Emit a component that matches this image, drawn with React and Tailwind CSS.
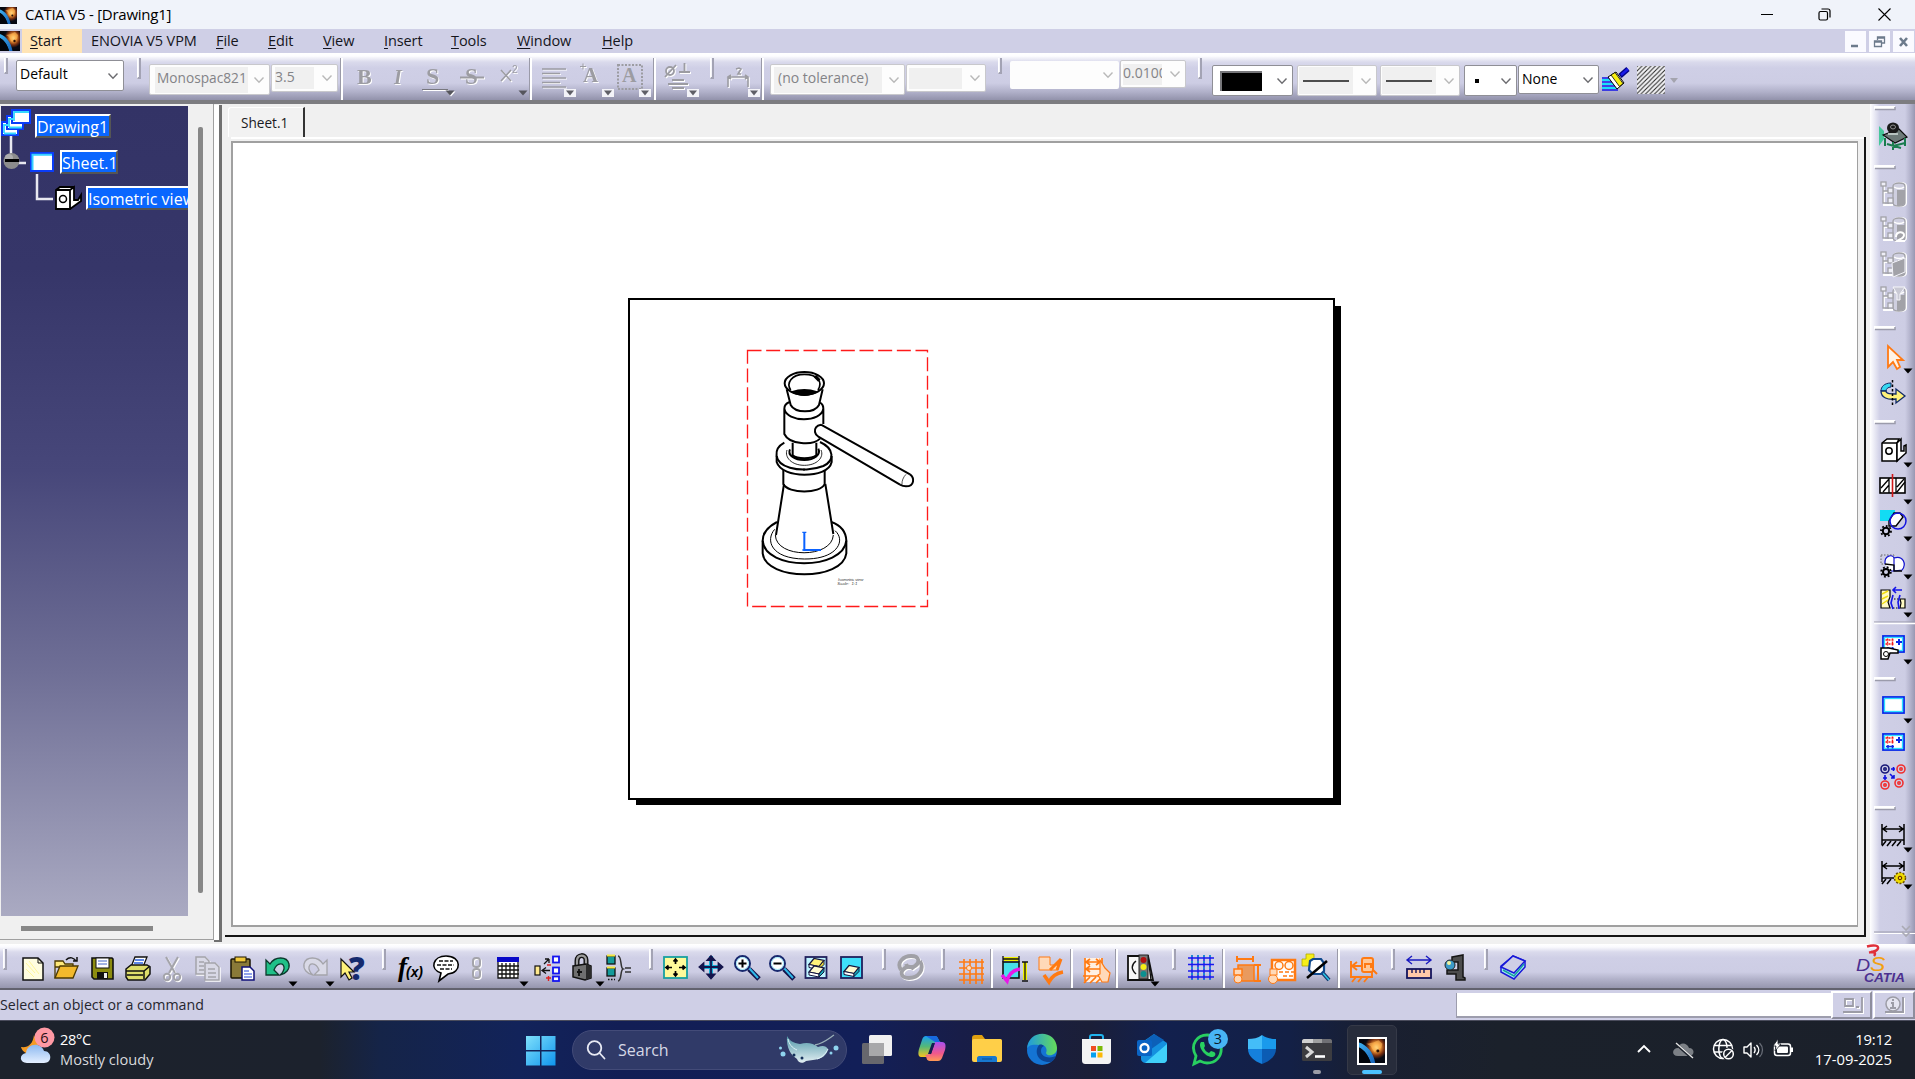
import React from "react";

/* ---------- shared pieces ---------- */

const UI = "font-['Open_Sans','Noto_Sans',sans-serif]";

function Draw({ w, h = 46, className = "", children }) {
  return (
    <svg width={w} height={h} viewBox={`0 0 ${w} ${h}`} className={`block shrink-0 overflow-visible ${className}`} fill="none">
      {children}
    </svg>
  );
}

function Grip({ cell, tall }) {
  return (
    <div className={`shrink-0 ${cell}`}>
      <div className={`mt-[5px] w-[4px] border-r-2 border-b-2 border-l border-r-[#a3a3b4] border-b-[#a3a3b4] border-l-white bg-[#f4f4fa] ${tall ? "h-[21px]" : "h-[16px]"}`} />
    </div>
  );
}

function Sep({ cell }) {
  return (
    <div className={`shrink-0 pt-[5px] ${cell}`}>
      <div className="h-full w-[3px] border-l border-[#9a9aa8] bg-white" />
    </div>
  );
}

function Combo({ cell, box, text, textBox = "", disabled, frame, children }) {
  return (
    <div className={`shrink-0 ${cell}`}>
      <div
        className={`relative flex items-center justify-between rounded-[2px] border ${
          disabled ? "border-[#c8c8cc] bg-[#fdfdfd] text-[#838387]" : "border-[#8f8f96] bg-white text-black"
        } ${frame || ""} ${box}`}
      >
        <div className={`overflow-hidden whitespace-nowrap ${textBox} ${disabled ? "bg-[#f0f0f0]" : ""}`}>{text}{children}</div>
        <svg width="12" height="8" viewBox="0 0 12 8" className="mr-[4px] shrink-0" fill="none">
          <path d="M1.5 1.5 6 6.3 10.500 1.500" stroke={disabled ? "#b9b9b9" : "#6c6c70"} strokeWidth="1.4" />
        </svg>
      </div>
    </div>
  );
}

const Galaxy = ({ className }) => (
  <svg viewBox="0 0 20 20" preserveAspectRatio="none" className={className}>
    <defs>
      <radialGradient id="glow" cx="0.58" cy="0.38" r="0.55">
        <stop offset="0" stopColor="#fff0a0" />
        <stop offset="0.35" stopColor="#f29a38" />
        <stop offset="0.7" stopColor="#7a3010" />
        <stop offset="1" stopColor="#070a14" />
      </radialGradient>
      <linearGradient id="planet" x1="0" y1="0" x2="1" y2="1">
        <stop offset="0" stopColor="#3fb0f0" />
        <stop offset="1" stopColor="#1561b8" />
      </linearGradient>
    </defs>
    <rect width="20" height="20" fill="#05070f" />
    <rect x="4" width="16" height="18" fill="url(#glow)" />
    <path d="M0 3C6 5 11 11 12.500 20H9C7.500 14 4 9 0 7Z" fill="url(#planet)" />
    <path d="M0 7C4 9 7.500 14 9 20H0Z" fill="#02050c" />
    <path d="M3 2l3 2 5-1 4-2 3 3-1 4-3-1-2 4-3-5z" fill="#ffb95a" opacity=".55" />
    <circle cx="14.500" cy="10" r="1.200" fill="#2a1208" />
  </svg>
);

const Tri = ({ x, y, c = "#000" }) => <path d={`M${x - 4.5} ${y - 2.5}h9l-4.500 5z`} fill={c} />;
const TriBox = ({ x, y }) => (
  <g>
    <rect x={x - 6} y={y - 4} width="12" height="8" fill="#f3f3f8" />
    <path d={`M${x - 4} ${y - 2.5}h8l-4 5z`} fill="#5f5f66" />
  </g>
);

/* ---------- title and menu ---------- */

function TitleBar() {
  return (
    <div className="flex h-[29px] items-center bg-[#f0f3fa]">
      <Galaxy className="mt-[1px] h-[17px] w-[17px]" />
      <div className="ml-[8px] text-[15px] leading-none tracking-[-0.25px]">CATIA V5 - [Drawing1]</div>
      <div className="flex-1" />
      <svg width="12" height="12" viewBox="0 0 12 12" className="mr-[45px]" stroke="#000" fill="none"><path d="M0 5.500h12" /></svg>
      <svg width="13" height="13" viewBox="0 0 13 13" className="mr-[47px]" stroke="#000" strokeWidth="1.200" fill="none">
        <rect x="1" y="3.500" width="8.500" height="8.500" rx="1.500" />
        <path d="M3.500 1h6.500a2 2 0 0 1 2 2v6.500" />
      </svg>
      <svg width="13" height="13" viewBox="0 0 13 13" className="mr-[24px]" stroke="#000" strokeWidth="1.100" fill="none"><path d="M.5.5l12 12M12.500.5l-12 12" /></svg>
    </div>
  );
}

function MenuItem({ cell, label, plain }) {
  return (
    <div className={`shrink-0 whitespace-nowrap ${cell}`}>
      {plain ? label : (<><span className="underline underline-offset-2">{label[0]}</span>{label.slice(1)}</>)}
    </div>
  );
}

function MenuBar() {
  return (
    <div className="flex h-[24px] items-center bg-[#cfcfe6] text-[14.5px] leading-[24px] tracking-[-0.1px] text-[#15151c]">
      <Galaxy className="h-[20px] w-[20px]" />
      <MenuItem cell="ml-[2px] w-[60px] bg-[#ffe4b5] pl-[8px]" label="Start" />
      <MenuItem cell="ml-[9px] w-[125px]" label="ENOVIA V5 VPM" plain />
      <MenuItem cell="w-[52px]" label="File" />
      <MenuItem cell="w-[55px]" label="Edit" />
      <MenuItem cell="w-[61px]" label="View" />
      <MenuItem cell="w-[67px]" label="Insert" />
      <MenuItem cell="w-[66px]" label="Tools" />
      <MenuItem cell="w-[85px]" label="Window" />
      <MenuItem cell="" label="Help" />
      <div className="flex-1" />
      <div className="flex gap-[3px] pr-[1px]">
        <div className="h-[21px] w-[21px] bg-[#fafaff]"><Draw w={21} h={21}><path d="M6 15h7" stroke="#6d7b8c" strokeWidth="2.500" /></Draw></div>
        <div className="h-[21px] w-[21px] bg-[#fafaff]"><Draw w={21} h={21}><path d="M8.500 9V6h7v6h-2.500M8.500 7h7M5.500 10h7v5.500h-7zM5.500 11h7" stroke="#6d7b8c" strokeWidth="1.300" /></Draw></div>
        <div className="h-[21px] w-[21px] bg-[#fafaff]"><Draw w={21} h={21}><path d="M7 7l7 8M14 7l-7 8" stroke="#6d7b8c" strokeWidth="2.600" /></Draw></div>
      </div>
    </div>
  );
}

/* ---------- top toolbar ---------- */

const GREY = "#9c9ca2";

function TopToolbar() {
  return (
    <div className="h-[51px] shrink-0 border-b-[4px] border-[#7c7c80] bg-[linear-gradient(180deg,#ffffff_0px,#fdfdff_3px,#dadaec_9px,#cfcfe6_15px,#cdcde4_30px,#b0b0c9_39px,#9292ab_47px)]">
      <div className="flex h-[47px] pl-[4px] text-[14px] leading-none">
        <Grip cell="w-[12px]" />
        <Combo cell="w-[121px] pt-[7px]" box="h-[31px] w-[108px] pl-[3px]" textBox="h-[22px] pt-[2px]" text="Default" />
        <Grip cell="w-[12px]" tall />
        <Combo cell="w-[122px] pt-[11px]" box="h-[31px] w-[121px] pl-[5px]" textBox="h-[26px] w-[93px] pt-[4px] pl-[2px] text-[13.7px]" text="Monospac821" disabled />
        <Combo cell="w-[69px] pt-[11px]" box="h-[28px] w-[67px] pl-[3px]" textBox="h-[22px] w-[39px] pt-[3px]" text="3.5" disabled />
        <Sep cell="w-[15px]" />
        <Draw w={35} className="drop-shadow-[1px_1px_0_#fff]"><text x="2" y="31" fontSize="22" fontWeight="700" fontFamily="Liberation Serif" fill={GREY}>B</text></Draw>
        <Draw w={30} className="drop-shadow-[1px_1px_0_#fff]"><text x="4" y="31" fontSize="20" fontWeight="700" fontStyle="italic" fontFamily="Liberation Serif" fill={GREY}>I</text></Draw>
        <Draw w={38} className="drop-shadow-[1px_1px_0_#fff]">
          <text x="6" y="31" fontSize="24" fontWeight="700" fontFamily="Liberation Serif" fill={GREY}>S</text>
          <path d="M2 36.500h26" stroke="#77777e" /><Tri x={30} y={40} c="#55555c" />
        </Draw>
        <Draw w={40} className="drop-shadow-[1px_1px_0_#fff]">
          <text x="7" y="31" fontSize="23" fontWeight="700" fontFamily="Liberation Serif" fill={GREY}>S</text>
          <path d="M2 24.500h24" stroke={GREY} strokeWidth="2" />
        </Draw>
        <Draw w={31}>
          <g className="drop-shadow-[1px_1px_0_#fff]"><path d="M3 17l10 11M13 17L3 28" stroke={GREY} strokeWidth="1.600" /><text x="14" y="20" fontSize="10" fontFamily="Liberation Sans" fill={GREY}>2</text></g>
          <Tri x={25} y={40} c="#55555c" />
        </Draw>
        <Sep cell="w-[12px]" />
        <Draw w={38}>
          <path d="M1 16h24M1 20.500h18M1 25h24M1 29.500h18M1 34h24" stroke="#fff" transform="translate(1 1)" />
          <path d="M1 16h24M1 20.500h18M1 25h24M1 29.500h18M1 34h24" stroke={GREY} strokeWidth="1.300" /><TriBox x={29} y={40} />
        </Draw>
        <Draw w={37}>
          <g className="drop-shadow-[1px_1px_0_#fff]"><path d="M1 13.500h6M4 10.500v6" stroke={GREY} /><text x="4" y="29" fontSize="21" fontFamily="Liberation Serif" fontWeight="700" fill={GREY}>A</text></g>
          <TriBox x={29} y={40} />
        </Draw>
        <Draw w={37}>
          <rect x="2" y="12" width="24" height="24" stroke={GREY} strokeWidth="2" strokeDasharray="2 1.500" /><text x="6" y="29" fontSize="20" fontFamily="Liberation Serif" fontWeight="700" fill={GREY}>A</text>
          <TriBox x={29} y={40} />
        </Draw>
        <Sep cell="w-[10px]" />
        <Draw w={47}>
          <g stroke={GREY} strokeWidth="1.800" className="drop-shadow-[1px_1px_0_#fff]"><circle cx="7" cy="18" r="4" /><path d="M2 24L13 12M16 19h11M21.500 10v9M9 27h12M5 31h20M9 35h12" /></g>
          <TriBox x={30} y={40} />
        </Draw>
        <Grip cell="w-[16px]" tall />
        <Draw w={35}>
          <g stroke={GREY} strokeWidth="1.600" className="drop-shadow-[1px_1px_0_#fff]"><path d="M2 34V24h20v10M5 22l-3 2 3 2M19 22l3 2-3 2M10 16l3-1 2 1-3 5h3" /></g>
          <TriBox x={28} y={40} />
        </Draw>
        <Sep cell="w-[9px]" />
        <Combo cell="w-[136px] pt-[11px]" box="h-[31px] w-[135px] pl-[3px]" textBox="h-[26px] w-[108px] pl-[4px] pt-[4px]" text="(no tolerance)" disabled />
        <Combo cell="w-[92px] pt-[11px]" box="h-[28px] w-[80px] pl-[2px]" textBox="h-[21px] w-[53px]" disabled />
        <Grip cell="w-[12px]" />
        <Combo cell="w-[110px] pt-[8px]" box="h-[28px] w-[109px]" frame="border-transparent" disabled />
        <Combo cell="w-[78px] pt-[7px]" box="h-[28px] w-[66px] pl-[2px]" textBox="h-[21px] w-[39px] pt-[2px]" text="0.0100" disabled />
        <Grip cell="w-[14px]" tall />
        <Combo cell="w-[85px] pt-[12px]" box="h-[31px] w-[81px] pl-[7px]"><div className="h-[20px] w-[42px] border-t-2 border-l-2 border-[#77777b] bg-black" /></Combo>
        <Combo cell="w-[83px] pt-[12px]" box="h-[31px] w-[80px] pl-[1px]" textBox="flex h-[27px] w-[54px] items-center justify-center" disabled><div className="h-[2px] w-[46px] bg-[#4d4d4d]" /></Combo>
        <Combo cell="w-[84px] pt-[12px]" box="h-[31px] w-[80px] pl-[1px]" textBox="flex h-[27px] w-[54px] items-center justify-center" disabled><div className="h-[2px] w-[46px] bg-[#4d4d4d]" /></Combo>
        <Combo cell="w-[54px] pt-[12px]" box="h-[31px] w-[53px] pl-[10px]"><div className="h-[4px] w-[4px] bg-black" /></Combo>
        <Combo cell="w-[83px] pt-[12px]" box="h-[29px] w-[81px] pl-[3px]" textBox="h-[20px] pt-[2px]" text="None" />
        <Draw w={36}>
          <path d="M1 25h16M1 29h16M1 33h16M1 37h16" stroke="#1414e8" strokeWidth="1.600" /><path d="M1 27h14M1 31h14M1 35h16" stroke="#18e0f8" strokeWidth="2" />
          <path d="M7 24l8-5 8 11-7 6z" fill="#fff" stroke="#000" /><path d="M10 22l4-2.500 8 11-3.500 3z" fill="#f8ee10" stroke="#000" strokeWidth=".8" />
          <path d="M19 23l8-7" stroke="#000084" strokeWidth="5" /><path d="M20 22l7-6" stroke="#1a1ae8" strokeWidth="2.500" />
        </Draw>
        <Draw w={33}>
          <defs><pattern id="hatch" width="4.500" height="4.500" patternUnits="userSpaceOnUse"><path d="M-1 5.500L5.500-1M-1 1L1-1M3.500 5.500L5.500 3.500" stroke="#222" strokeWidth="1" /></pattern></defs>
          <rect x="0" y="13" width="28" height="28" fill="#f3f3f6" /><rect x="0" y="13" width="28" height="28" fill="url(#hatch)" />
        </Draw>
        <Draw w={10}><path d="M0 25h8l-4 5z" fill="#a4a4ae" /></Draw>
      </div>
    </div>
  );
}

/* ---------- specification tree ---------- */

function TreeLabel({ className = "", children }) {
  return (
    <div className={`h-[24px] shrink-0 border-t-2 border-l-2 border-r-2 border-b-2 border-t-white border-l-white border-r-[#555] border-b-[#555] bg-[#0a66ff] text-[16px] leading-[23px] whitespace-nowrap text-white ${className}`}>
      {children}
    </div>
  );
}

function Tree() {
  return (
    <div className="flex h-[836px] w-[214px] shrink-0 flex-col border-r border-b border-[#a0a0a0] bg-[#f0f0f0]">
      <div className="flex h-[814px] pt-[2px] pl-[1px]">
        <div className="relative h-[810px] w-[187px] overflow-hidden bg-[linear-gradient(180deg,#333366_0%,#363669_20%,#47477a_45%,#6f6f96_70%,#aaaac2_100%)]">
          <Draw w={90} h={110} className="absolute top-0 left-0">
            <path d="M10 28v23M17 57h8M36 68v25h16" stroke="#e8e8f0" strokeWidth="2.500" />
            <g strokeWidth="2" stroke="#0a3cf8"><rect x="1" y="16" width="16" height="13" fill="#fff" /><rect x="6" y="10" width="16" height="13" fill="#fff" /><rect x="11" y="4" width="18" height="13" fill="#fff" /></g>
            <path d="M13 15V6h15M8 21v-8h4M3 27v-8h4M3 27.500h12M8 21.500h13" stroke="#35d8ff" strokeWidth="1.800" />
            <circle cx="10.500" cy="55" r="8" fill="#8c8c8c" /><circle cx="8" cy="52" r="4" fill="#aeaeae" /><path d="M4 54.500h14" stroke="#000" strokeWidth="3" />
            <rect x="30" y="47" width="22" height="18" fill="#fff" stroke="#0a3cf8" strokeWidth="2" /><path d="M31.500 64V48.800h19.500" stroke="#35d0ff" strokeWidth="2" />
            <path d="M55 84l4-3h13v18l-3 4H55z" fill="#fff" stroke="#000" strokeWidth="1.800" /><path d="M69 103V84H55M69 84l4-3v13h4l3-5v6l-11 8" fill="#fff" stroke="#000" strokeWidth="1.800" /><circle cx="62" cy="93" r="3.500" stroke="#000" strokeWidth="1.500" />
          </Draw>
          <div className="flex flex-col pt-[8px]">
            <TreeLabel className="ml-[34px] w-[76px]">Drawing1</TreeLabel>
            <TreeLabel className="mt-[12px] ml-[59px] w-[58px]">Sheet.1</TreeLabel>
            <TreeLabel className="mt-[12px] ml-[85px] w-[120px]">Isometric view</TreeLabel>
          </div>
        </div>
        <div className="mt-[21px] ml-[10px] h-[766px] w-[5px] rounded-[2px] bg-[#878787]" />
      </div>
      <div className="mt-[8px] ml-[21px] h-[5px] w-[132px] bg-[#878787]" />
    </div>
  );
}

/* ---------- drawing canvas ---------- */

function ScrewJack() {
  return (
    <svg viewBox="0 0 600 840" width="200" height="280" className="absolute top-[197px] left-[507px]" fill="none" stroke="#000" strokeWidth="6">
      <rect x="22.500" y="31.500" width="540" height="768" stroke="#ff1a1a" strokeWidth="4" strokeDasharray="42 14" />
      <ellipse cx="193" cy="130" rx="59" ry="34" />
      <path d="M152 150C138 128 155 103 193 103S250 125 234 150" strokeWidth="5" />
      <path d="M225 108l13 14" strokeWidth="10" />
      <path d="M158 156c20-8 50-8 70 0-20 12-50 12-70 0z" fill="#000" />
      <path d="M140 148l12 47C158 206 172 214 195 214s36-8 42-19l11-47" />
      <path d="M149 186C138 190 133 198 133 206C140 248 244 248 250 206C250 198 248 192 240 188M133 206v76C148 314 218 318 240 296M250 206v46" />
      <path d="M243 254c-14 2-20 12-18 22s6 12 10 14M243 254L510 403M235 290L480 434" />
      <path d="M510 403c14 10 14 36-12 36-8 0-13-2-18-5" />
      <path d="M498 403c-8 8-13 20-12 30" strokeWidth="2" />
      <path d="M158 308v38c14 12 56 12 71 0v-38" />
      <path d="M150 328c-8 16 12 32 43 32s50-16 42-34" strokeWidth="6" />
      <path d="M141 330c-8 22 14 46 52 46s60-24 50-46" strokeWidth="2.500" />
      <path d="M133 308C100 326 98 368 150 383C180 392 220 390 250 378C284 362 284 326 240 306" />
      <path d="M110 348v18C118 392 156 404 193 404s76-10 82-38v-18" />
      <path d="M130 390v42C144 462 242 462 254 432v-42" />
      <path d="M132 432L108 585M256 432L280 582" />
      <path d="M111 546C84 560 68 578 68 602C74 692 310 692 319 602C318 576 302 556 274 546" />
      <path d="M68 602v38C78 724 308 724 319 640v-38" />
      <path d="M104 568C76 600 92 656 193 657S318 600 285 572" strokeWidth="3" />
      <path d="M106 585C108 656 276 656 280 585" strokeWidth="3" />
      <path d="M192 385v8" strokeWidth="3" />
      <path d="M193 577v53h50" stroke="#0a62ff" strokeWidth="6" />
      <path d="M187 577h12M187 630h10" stroke="#0a62ff" strokeWidth="4" />
      <g fill="#444" stroke="none" fontFamily="Liberation Sans" fontStyle="italic" fontSize="13">
        <text x="294" y="724" textLength="76">Isometric view</text>
        <text x="292" y="736" textLength="60" xmlSpace="preserve">Scale:  1:1</text>
      </g>
    </svg>
  );
}

function DrawingWindow() {
  return (
    <div className="flex h-[840px] flex-1 bg-[#f0f0f0]">
      <div className="mt-[1px] mr-[3px] h-[837px] w-[8px] border-r-[3px] border-b-[2px] border-[#707070] bg-white" />
      <div className="flex h-[833px] w-[1641px] flex-col pl-[3px]">
        <div className="mt-[3px] flex h-[30px] shrink-0">
          <div className="h-[30px] w-[77px] rounded-tl-[3px] border-t border-r-[2px] border-l border-t-white border-r-[#333] border-l-white bg-[#f2f2f2] pt-[8px] pl-[12px] text-[13.6px] leading-none text-[#1a1a22]">Sheet.1</div>
        </div>
        <div className="-ml-[3px] h-[800px] border-r-2 border-b-2 border-[#151515] pl-[6px]">
          <div className="h-[2px] bg-white" />
          <div className="relative mt-[2px] h-[786px] w-[1627px] overflow-hidden border-t-2 border-r border-b-2 border-l-2 border-[#a0a0a0] bg-white">
            <div className="absolute top-[163px] left-[403px] h-[499px] w-[705px] bg-black" />
            <div className="absolute top-[155px] left-[395px] h-[502px] w-[707px] border-2 border-black bg-white" />
            <ScrewJack />
          </div>
        </div>
      </div>
    </div>
  );
}

/* ---------- right toolbar ---------- */

const HG = ({ at }) => (
  <g transform={`translate(4 ${at})`}><rect width="21" height="3" fill="#fff" /><path d="M1 3.500h20V1" stroke="#9b9bab" strokeWidth="1.500" /></g>
);

function DbIcon({ at, kind }) {
  return (
    <g transform={`translate(10 ${at})`}>
      <path d="M14 5c0-4 12-4 12 0v17c0 4-12 4-12 0z" stroke="#fff" strokeWidth="2" />
      <path d="M13 5c0-4 12-4 12 0v17c0 4-12 4-12 0z" fill="#cfcfe0" stroke="#a2a2a8" strokeWidth="1.300" />
      <path d="M17 9h8v13c0 2-4 3-8 3z" fill="#a2a2a8" />
      <path d="M14 6c3 2 8 2 10 0" stroke="#fff" strokeWidth="1.500" />
      <g transform="translate(1 1)" stroke="#fff" strokeWidth="1.800"><path d="M3 2v21h9M3 10h5" /></g>
      <g fill="#eeeef6" stroke="#a2a2a8" strokeWidth="1.300"><path d="M3 4v18h6M3 10h5" fill="none" /><rect x="1" y="1" width="5" height="4" /><rect x="8" y="7" width="5" height="5" /><rect x="8" y="17" width="5" height="5" /></g>
      {kind === 1 && <path d="M16 21c0-6 8-6 8-2s-5 4-7 6h8" stroke="#fff" strokeWidth="2" />}
      {kind === 2 && <path d="M12 12l13-5v14l-12 5z" fill="#a2a2a8" stroke="#f4f4fa" />}
      {kind === 3 && <path d="M13 1h12l-5 7v6h-3V8z" fill="#c9c9d4" stroke="#f6f6fa" />}
    </g>
  );
}

const MiniSheet = ({ at }) => (
  <g transform={`translate(12 ${at})`}>
    <rect x="1" y="1" width="21" height="16" fill="#fff" stroke="#0628e8" strokeWidth="1.800" /><rect x="2.500" y="2.500" width="18" height="13" stroke="#2be0ff" strokeWidth="1.300" />
  </g>
);
const MiniViews = () => (
  <g>
    <path d="M3.500 5h9M3.500 9h9M5.500 3.500v7M10.500 3.500v7" stroke="#f01818" strokeWidth="1.400" strokeDasharray="2 1" /><path d="M14 7h6M17 4v6" stroke="#0a28e8" strokeWidth="2" />
    <path d="M4 13.500h8M6 12v3.500M10.500 12v3.500" stroke="#0a28e8" strokeWidth="1.600" />
  </g>
);

function RightToolbar() {
  return (
    <div className="h-[843px] w-[45px] shrink-0 bg-[linear-gradient(90deg,#ffffff_0px,#ececf6_4px,#cfcfe6_10px,#cdcde4_35px,#b4b4cd_40px,#9898b2_45px)]">
      <Draw w={45} h={840}>
        <HG at={2} />
        <g transform="translate(9 17)">
          <path d="M0 5l5 5v8l-5 7z" fill="#45c79a" /><path d="M4 14l16-6 8 8-12 6z" fill="#6d7a78" stroke="#0b0b0b" strokeWidth="1.200" /><path d="M6 17v8M14 21v8M26 17v8M14 25l12-3M8 23l14 4" stroke="#1a7d4f" strokeWidth="2" />
          <ellipse cx="14" cy="7" rx="6" ry="5.500" fill="#1a1a1a" /><ellipse cx="14" cy="6" rx="2.500" ry="2" stroke="#8f8f8f" /><path d="M9 13h10" stroke="#b8c4c0" strokeWidth="2" />
        </g>
        <HG at={61} />
        <DbIcon at={77} /><DbIcon at={112} kind={1} /><DbIcon at={147} kind={2} /><DbIcon at={182} kind={3} />
        <path d="M18 242v21l5-5 4 7 3-2-3-7h6z" fill="#fff3e6" stroke="#ff7a14" strokeWidth="1.800" /><Tri x={38} y={267} />
        <HG at={222} />
        <g transform="translate(10 276)">
          <path d="M11 3C4 3 1 7 1 11h5c0-2 2-4 5-4z" fill="#35d8f0" stroke="#102a66" /><path d="M1 11c0 7 7 9 15 8v4l9-7-9-7v5c-5 0-10 0-10-3z" fill="#fff27a" stroke="#102a66" strokeWidth="1.300" /><path d="M12.500 0v26" stroke="#000" strokeWidth="1.500" strokeDasharray="2.500 2" />
        </g>
        <HG at={316} />
        <g transform="translate(11 333)" stroke="#000" strokeWidth="1.500"><path d="M1 6l5-4h12l-2 4v18H1z" fill="#fff" /><path d="M16 6l4-4v12h3v-5l2-1v8l-9 8z" fill="#fff" /><path d="M1 6h15" /><circle cx="8" cy="14" r="3.200" /></g>
        <Tri x={38} y={361} />
        <g transform="translate(10 370)"><rect x="0" y="4" width="25" height="15" fill="#fff" stroke="#000" strokeWidth="1.600" /><path d="M9 4v15M16 4v15M1 14l8-9M3 18l6-7M17 13l7-8M17 18l8-10" stroke="#000" strokeWidth="1.300" /><path d="M12.500 0v23" stroke="#d01818" strokeWidth="1.600" /></g>
        <Tri x={38} y={398} />
        <g transform="translate(10 405)"><rect x="0" y="1" width="15" height="11" fill="#12dcf4" /><path d="M9 12l5-8h6l3 4-7 9h-7z" fill="#fff" stroke="#000" strokeWidth="1.400" /><circle cx="18" cy="12" r="8" stroke="#1414e0" strokeWidth="1.500" /><circle cx="6" cy="22" r="3.200" stroke="#000" strokeWidth="2" /><circle cx="6" cy="22" r="5" stroke="#000" strokeWidth="1.800" strokeDasharray="1.800 2" /></g>
        <Tri x={38} y={435} />
        <g transform="translate(10 448)"><path d="M1 3h13v9H1z" stroke="#666" strokeDasharray="1.500 1.500" /><path d="M5 12C4 3 13 2 14 6v13h-3M14 6c9-3 13 6 8 12l-8 1" fill="#fff" stroke="#1414d0" strokeWidth="1.200" /><path d="M5 12l9 1v6h8" stroke="#000" strokeWidth="1.300" /><circle cx="6" cy="20" r="3" stroke="#000" strokeWidth="2" /><circle cx="6" cy="20" r="4.800" stroke="#000" strokeWidth="1.800" strokeDasharray="1.800 2" /></g>
        <Tri x={38} y={473} />
        <g transform="translate(10 482)"><path d="M1 4h9v7l-2 5 2 6H1z" fill="#fffbc4" stroke="#000" strokeWidth="1.200" /><path d="M20 13h5v9h-5l1-5z" fill="#fffbc4" stroke="#000" strokeWidth="1.200" /><path d="M2 8l6-3M2 13l6-3M2 18l6-4" stroke="#f0dc10" strokeWidth="1.500" /><path d="M14 13h5M13 22h5" stroke="#000" strokeDasharray="1.500 1.500" /><path d="M13 9l-2 8 2 6M20 9l-2 7 1 7M13 4h9M16 1l-3 3 3 3" stroke="#1414e8" strokeWidth="1.600" /></g>
        <Tri x={38} y={511} />
        <path d="M4 518h41" stroke="#9b9bab" /><path d="M4 519.500h41" stroke="#fff" strokeWidth="1.500" />
        <MiniSheet at={531} /><g transform="translate(12 531)"><MiniViews /></g>
        <path d="M11 544h8l9 2v3h-8l-2 6h-7z" fill="#fff" stroke="#000" strokeWidth="1.500" /><circle cx="16" cy="550" r="2.500" stroke="#000" /><Tri x={38} y={558} />
        <HG at={573} />
        <MiniSheet at={592} /><Tri x={38} y={617} />
        <MiniSheet at={629} /><g transform="translate(12 629)"><MiniViews /></g>
        <g strokeWidth="1.600"><g stroke="#181878"><circle cx="15" cy="665" r="4" /><circle cx="15" cy="665" r="1.200" /></g><g stroke="#f03030"><circle cx="31" cy="665" r="4" /><circle cx="31" cy="665" r="1.200" /><circle cx="29" cy="679" r="4" /><circle cx="29" cy="679" r="1.200" /><circle cx="15" cy="681" r="4" /><circle cx="15" cy="681" r="1.200" /></g><path d="M21 665h4M23.500 663v4M15 671v5M13 674h4M20 670l4 4M24 671v3h-3" stroke="#1010e0" /></g>
        <HG at={702} />
        <g stroke="#000" strokeWidth="1.500"><path d="M12 720v21M34 720v21M13 725h20M17 722l-4 3 4 3M29 722l4 3-4 3M12 736h22" /><path d="M12 742l4-5M17 742l4-5M22 742l4-5M27 742l4-5" /></g><Tri x={38} y={746} />
        <g stroke="#000" strokeWidth="1.500"><path d="M12 757v21M34 757v10M13 762h20M17 759l-4 3 4 3M29 759l4 3-4 3M12 774h12" /><path d="M12 780l4-5M17 780l4-5" /></g>
        <circle cx="30" cy="774" r="5.500" fill="#f0dc00" stroke="#6b5200" strokeWidth="1.500" strokeDasharray="2 1.500" /><circle cx="30" cy="774" r="1.800" stroke="#5a1800" /><Tri x={38} y={783} />
        <path d="M4 828h41" stroke="#9b9bab" /><path d="M4 829.500h41" stroke="#fff" />
        <path d="M32 822l4 4 4-4M32 828l4 4 4-4" stroke="#aaaab4" strokeWidth="1.600" />
      </Draw>
    </div>
  );
}

/* ---------- bottom toolbar ---------- */

const O = "#ff7a12";

const Cube = ({ y, pale }) => (
  <g transform={`translate(5 ${y})`}><path d="M1 7l5-6 10 2-5 6z" fill={pale ? "#fff27a" : "#fffbd0"} stroke="#14143c" strokeWidth="1.200" /><path d="M1 7l10 2v3L1 10z" fill="#fff" stroke="#14143c" /><path d="M11 9l5-6v4l-5 5z" fill={pale ? "#e8d83c" : "#18a8b8"} stroke="#14143c" /></g>
);

function BottomToolbar() {
  return (
    <div className="flex h-[46px] shrink-0 border-b-2 border-[#62626e] bg-[linear-gradient(180deg,#ffffff_0px,#fafafe_3px,#dadaec_8px,#cfcfe6_14px,#cdcde4_28px,#b2b2ca_35px,#9696ae_44px)] pl-[3px]">
      <Grip cell="w-[19px]" tall />
      <Draw w={32}><path d="M1 14h15l5 5v17H1z" fill="#fffde0" stroke="#111" strokeWidth="1.500" /><path d="M16 14v5h5" stroke="#111" /><path d="M4 19l9 10M7 17l10 13M4 25l8 8" stroke="#fff69a" /></Draw>
      <Draw w={37}><path d="M1 17h8l2 3h8v3H1zM1 17v17" fill="#ffe97a" stroke="#4d3a00" strokeWidth="1.300" /><path d="M1 34l5-12h18l-5 12z" fill="#f2b92c" stroke="#4d3a00" strokeWidth="1.300" /><path d="M12 16c4-4 8-2 10 1M23 13v4h-4" stroke="#111" strokeWidth="1.500" /></Draw>
      <Draw w={34}><path d="M1 14h20l1 1v20H3l-2-2z" fill="#8c8c10" stroke="#111" strokeWidth="1.600" /><rect x="5" y="14" width="13" height="10" fill="#fff" stroke="#111" /><path d="M7 17h9M7 20h9" stroke="#4466c8" /><rect x="6" y="28" width="11" height="7" fill="#111" /><rect x="13" y="29" width="3" height="5" fill="#eee" /></Draw>
      <Draw w={38}><path d="M6 23l4-10h12l-4 10z" fill="#fff" stroke="#111" strokeWidth="1.300" /><path d="M10 16h9M9 19h9" stroke="#2c62e0" strokeWidth="1.500" /><path d="M1 25l5-4h16l3 2v7l-5 6H3l-2-3z" fill="#dede6a" stroke="#111" strokeWidth="1.500" /><path d="M1 27h18l6-5M19 27v8M2 31h16" stroke="#111" strokeWidth="1.500" /></Draw>
      <Draw w={32} className="drop-shadow-[1px_1px_0_#fff]"><path d="M3 13l9 16M15 13L6 29" stroke="#a4a4aa" strokeWidth="2" /><circle cx="4" cy="33" r="3.200" stroke="#a4a4aa" strokeWidth="2" /><circle cx="14" cy="33" r="3.200" stroke="#a4a4aa" strokeWidth="2" /></Draw>
      <Draw w={35} className="drop-shadow-[1px_1px_0_#fff]"><g stroke="#a4a4aa" strokeWidth="1.500" fill="#d9d9e6"><path d="M1 13h9l4 4v13H1z" /><path d="M10 19h10l4 4v13H10z" /><path d="M4 18h5M4 22h5M4 26h5M13 25h7M13 29h8M13 33h8" /></g></Draw>
      <Draw w={36}><rect x="1" y="15" width="19" height="19" rx="1" fill="#8a7a38" stroke="#1a1400" strokeWidth="1.500" /><rect x="5" y="13" width="11" height="5" fill="#f0c83c" stroke="#1a1400" /><path d="M12 23h8l4 4v9H12z" fill="#fff" stroke="#10107a" strokeWidth="1.500" /><path d="M14 27h5M14 30h8M14 33h8" stroke="#2244d8" /></Draw>
      <Draw w={37}><path d="M0 16v15h13l-5-5c3-8 11-8 10-1-1 3-2 5-4 6 6-1 10-6 9-11-2-8-14-8-19 0z" fill="#20c088" stroke="#0b3a2c" strokeWidth="1.300" /><Tri x={27} y={40} /></Draw>
      <Draw w={37}><path d="M24 16v15H11l5-5c-3-8-11-8-10-1 1 3 2 5 4 6-6-1-10-6-9-11 2-8 14-8 19 0z" fill="#d9d9e6" stroke="#a4a4aa" strokeWidth="1.300" /><Tri x={27} y={40} /></Draw>
      <Draw w={42}><text x="9" y="36" fontSize="31" fontWeight="800" fontFamily="Open Sans" fill="#152a6e">?</text><path d="M1 15v18l4-4 4 7 3-2-3-6h5z" fill="#fff27a" stroke="#111" strokeWidth="1.200" /></Draw>
      <Grip cell="w-[15px]" tall />
      <Draw w={36}><text x="1" y="32" fontSize="27" fontStyle="italic" fontFamily="Liberation Serif" fontWeight="700" fill="#000">f</text><text x="9" y="33" fontSize="15" fontStyle="italic" fontWeight="700" fontFamily="Liberation Sans" textLength="17" lengthAdjust="spacingAndGlyphs" fill="#000">(x)</text></Draw>
      <Draw w={38}><path d="M13 12c16 0 16 17 2 18l-9 7 2-8C-4 25 0 12 13 12z" fill="#fff" stroke="#000" strokeWidth="1.600" /><path d="M6 17h14M4 21h17M7 25h12" stroke="#111" strokeWidth="1.400" strokeDasharray="4 1.500" /></Draw>
      <Draw w={26} className="drop-shadow-[1px_1px_0_#fff]"><rect x="2" y="14" width="7" height="9" rx="3" stroke="#a4a4aa" strokeWidth="2" /><rect x="2" y="25" width="7" height="9" rx="3" stroke="#a4a4aa" strokeWidth="2" /></Draw>
      <Draw w={37}><rect x="1" y="14" width="21" height="20" fill="#fff" /><path d="M1 14h20v20H1zM1 22h21M1 26h21M1 30h21M5 19v15M9 19v15M13 19v15M17 19v15" stroke="#111" strokeWidth="1.300" /><path d="M0 15.500h22" stroke="#0808c8" strokeWidth="5" /><Tri x={27} y={40} /></Draw>
      <Draw w={38}><rect x="1" y="22" width="5" height="9" fill="#ffe98c" stroke="#111" strokeWidth="1.200" /><path d="M8 26.500h8M12 23.500l-4 3 4 3M10 20l5-5M15 15v4M15 15h-4" stroke="#111" strokeWidth="1.300" /><g fill="#fff" stroke="#1414f0" strokeWidth="1.800"><rect x="19" y="12.500" width="6" height="6" /><rect x="19" y="23.500" width="6" height="6" /><rect x="19" y="32.500" width="6" height="4.500" /></g><path d="M12 34h5M14.500 32v5M13 21h4" stroke="#e02020" strokeWidth="1.400" /></Draw>
      <Draw w={34}><path d="M5 23v-6c0-7 9-7 9-1v5" stroke="#111" strokeWidth="5" /><path d="M5 23v-6c0-7 9-7 9-1v5" stroke="#9c9c9c" strokeWidth="2.200" /><path d="M1 22l13-2 5 2v12l-6 2-12-3z" fill="#707070" stroke="#111" strokeWidth="1.500" /><path d="M14 20l5 2v12l-5 2z" fill="#2c2c2c" /><path d="M7 25v7M5 28h5" stroke="#111" strokeWidth="1.800" /><Tri x={28} y={40} /></Draw>
      <Draw w={43}><rect x="1" y="12" width="8" height="8" fill="#149a9a" stroke="#111" strokeWidth="1.300" /><rect x="1" y="24" width="8" height="8" fill="#149a9a" stroke="#111" strokeWidth="1.300" /><path d="M1 11.500h8M1 23.500h8" stroke="#f4e840" strokeWidth="1.800" /><path d="M2 35.500h7" stroke="#111" strokeWidth="1.500" strokeDasharray="1.500 1.500" /><path d="M12 12c4 0 2 12 5 13-3 1-1 12-5 12M19 24h6M19 28h6" stroke="#333" strokeWidth="1.500" /></Draw>
      <Grip cell="w-[15px]" tall />
      <Draw w={35}><rect x="0" y="13" width="23" height="21" fill="#fffa9a" stroke="#18a0a0" strokeWidth="1.800" /><path d="M11.500 15v5M11.500 27v5M2 23.500h6M15 23.500h6M9.500 17.500l2-2.500 2 2.500M9.500 29.500l2 2.500 2-2.500M4.500 21.500l-2.500 2 2.500 2M18.500 21.500l2.500 2-2.500 2" stroke="#000" strokeWidth="1.700" /></Draw>
      <Draw w={35}><path d="M12 12v22M1.500 23h21" stroke="#18b0d8" strokeWidth="4" /><path d="M12 12v22M1.500 23h21M8.500 16l3.500-4 3.500 4zM8.500 30.500l3.500 4 3.500-4zM4.500 19.500l-4 3.500 4 3.500zM19.500 19.500l4 3.500-4 3.500z" fill="#14144c" stroke="#14144c" strokeWidth="1.800" /></Draw>
      <Draw w={35}><path d="M15 25l10 10" stroke="#14144c" strokeWidth="5" /><path d="M15 24l9 10" stroke="#30b8e8" strokeWidth="2" /><circle cx="8.500" cy="19.500" r="7.500" fill="#fff" stroke="#18286e" strokeWidth="2" /><circle cx="8.500" cy="19.500" r="6" stroke="#9ce8fa" /><path d="M4.500 19.500h8M8.500 15.500v8" stroke="#000" strokeWidth="2" /></Draw>
      <Draw w={36}><path d="M15 25l10 10" stroke="#14144c" strokeWidth="5" /><path d="M15 24l9 10" stroke="#30b8e8" strokeWidth="2" /><circle cx="8.500" cy="19.500" r="7.500" fill="#fff" stroke="#18286e" strokeWidth="2" /><circle cx="8.500" cy="19.500" r="6" stroke="#9ce8fa" /><path d="M4.500 19.500h8" stroke="#000" strokeWidth="2" /></Draw>
      <Draw w={35}><rect x="0.500" y="13" width="21" height="21" fill="#bff4ff" stroke="#20205c" strokeWidth="1.800" /><g transform="translate(-2 0)"><Cube y={13.500} pale /><Cube y={21} /></g></Draw>
      <Draw w={42}><rect x="1" y="13" width="21" height="21" fill="#3fe0fa" stroke="#20205c" strokeWidth="1.800" /><g transform="translate(-2 0)"><Cube y={20.500} /></g></Draw>
      <Grip cell="w-[15px]" tall />
      <Draw w={44} className="drop-shadow-[1px_1px_0_#fff]"><g stroke="#a0a0a6" strokeWidth="3.800"><path d="M4 26C-1 18 7 12 14 12c9 0 9 7 4 10-4 2-8 1-9-2" /><path d="M23 17c5 9-2 17-11 17-9 0-9-7-4-10 4-2 7-1 9 1" /></g></Draw>
      <Grip cell="w-[18px]" tall />
      <Draw w={31}><path d="M5 15v25M11 15v25M17 15v25M23 15v25M0 18h25M0 24h25M0 30h25M0 36h25" stroke={O} strokeWidth="1.600" /><circle cx="10" cy="24" r="2.500" fill="#ffe0c4" stroke={O} /></Draw>
      <Sep cell="w-[11px]" />
      <Draw w={37}><rect x="2" y="18" width="16" height="16" fill="#48e0ea" stroke="#111" strokeWidth="1.600" /><path d="M3 15h14M24 18v18" stroke="#f0f000" strokeWidth="4" /><path d="M2 15h16M2 12v6M18 12v6M24 18v18M21 18h6M21 37h6" stroke="#111" strokeWidth="1.300" /><path d="M1 31l5 6c2-8 7-11 13-12" stroke="#e818e8" strokeWidth="3.500" /></Draw>
      <Draw w={32}><path d="M1 13h11v8h8v5H1z" fill="#ffd9b8" stroke={O} /><path d="M12 26l11-11M19 26l4-11" stroke={O} strokeWidth="3" /><path d="M6 31l5 7c3-6 8-9 14-10" stroke={O} strokeWidth="3.500" /></Draw>
      <Sep cell="w-[12px]" />
      <Draw w={33}><rect x="2" y="14" width="18" height="24" fill="#fff0e2" /><path d="M3 14v25M20 14v8M4 18h15M4 25h15M8 15l-4 3 4 3M14 15l4 3-4 3M8 22l-4 3 4 3M1 32h20M2 39l6-6M8 39l6-6M14 39l6-6" stroke={O} strokeWidth="1.700" /><path d="M18 16v14l-2 1 4 7h6l2-9-5-5z" fill="#ffd9b8" stroke={O} strokeWidth="1.200" /></Draw>
      <Sep cell="w-[11px]" />
      <Draw w={46}><path d="M2 12h20l5 24H2z" fill="#f8f8f8" stroke="#111" strokeWidth="1.800" /><path d="M10 17c-5 4-5 8 0 13M16 12h6l3 24h-9" stroke="#111" strokeWidth="1.400" /><rect x="13" y="11" width="9" height="24" fill="#777" stroke="#222" /><circle cx="17.500" cy="16" r="3" fill="#b01010" /><circle cx="17.500" cy="23" r="3" fill="#f6ee18" /><circle cx="17.500" cy="30" r="3" fill="#0c9090" /><Tri x={29} y={40} /></Draw>
      <Grip cell="w-[16px]" tall />
      <Draw w={34}><path d="M4 11v25M10 11v25M16 11v25M22 11v25M0 14h26M0 20.500h26M0 27h26M0 33h26" stroke="#1a1aee" strokeWidth="1.500" /><path d="M4 11v25M10 11v25M16 11v25M22 11v25" stroke="#14a0c8" strokeWidth="1.500" strokeDasharray="2 4" /></Draw>
      <Sep cell="w-[11px]" />
      <Draw w={35}><rect x="5" y="21" width="16" height="16" fill="#e99a5e" stroke={O} strokeWidth="1.500" /><path d="M4 15h16M4 12v6M20 12v6M25 21v16M21 21h7M21 37h7" stroke={O} strokeWidth="2" /><path d="M1 25h8v6H1z" fill="#ffd9b8" stroke={O} strokeWidth="1.500" /><circle cx="5" cy="35" r="4" fill="#ffd9b8" stroke={O} /></Draw>
      <Draw w={33}><rect x="4" y="16" width="23" height="20" fill="#fff" stroke={O} strokeWidth="2.500" /><circle cx="11" cy="21.500" r="4" fill="#fff4ea" stroke={O} strokeWidth="1.500" /><circle cx="21" cy="21.500" r="4" fill="#fff4ea" stroke={O} strokeWidth="1.500" /><path d="M11 28h15M15 32h11" stroke={O} strokeWidth="1.500" strokeDasharray="4 2" /><circle cx="5" cy="35" r="4.500" fill="#ffd9b8" stroke={O} /><rect x="2" y="25" width="7" height="6" fill="#ffd9b8" stroke={O} /></Draw>
      <Draw w={36}><path d="M5 10h8v8h-4v4H1v-7h4z" fill="#f6ee18" stroke="#b0a800" strokeWidth=".8" /><path d="M20 27l8 9" stroke="#18386e" strokeWidth="4" /><path d="M20 27l8 9" stroke="#28c8e8" strokeWidth="1.500" /><path d="M9 17l3-2h8l3 4v8l-3 3h-8l-4-4z" fill="#fff" stroke="#104a8e" strokeWidth="2.200" /><path d="M26 17L6 34" stroke="#000" strokeWidth="2.500" /></Draw>
      <Sep cell="w-[12px]" />
      <Draw w={42}><path d="M2 17v16M23 28v6M3 22h12M8 18l-5 4 5 4M1 33h22M3 38l4-5M9 38l4-5M15 38l4-5" stroke={O} strokeWidth="1.900" /><rect x="13" y="14" width="11" height="14" rx="2" fill="#ffc896" stroke={O} strokeWidth="2" /><path d="M16 24v-4h6v4M24 26l4 4" stroke={O} strokeWidth="2" /></Draw>
      <Grip cell="w-[15px]" tall />
      <Draw w={38}><path d="M2 16h22M6 12l-5 4 5 4M20 12l5 4-5 4" stroke="#1a1ac0" strokeWidth="1.400" /><rect x="1" y="25" width="24" height="9" fill="#ffc8a8" stroke="#14145c" strokeWidth="1.800" /><path d="M6 25v4M10 25v4M14 25v4M18 25v4" stroke="#14145c" strokeWidth="1.400" /></Draw>
      <Draw w={40}><path d="M8 13l11-2v22l2 1v2h-9v-6H3v-4h11v-8H8z" fill="#4c4c4c" stroke="#151515" strokeWidth="1.500" /><circle cx="6" cy="21" r="5" fill="#3c9ac8" stroke="#222" /><circle cx="5" cy="19" r="2" fill="#f4f49a" /></Draw>
      <Grip cell="w-[16px]" tall />
      <Draw w={30}><path d="M13 12l12 5v6L14 35 1 28v-6z" fill="#a8eef4" stroke="#1818d8" strokeWidth="1.500" /><path d="M13 12l12 5-11 12L1 23z" fill="#cfcfe6" stroke="#1818d8" strokeWidth="1.500" /><path d="M3 26l11 6 10-12" stroke="#18a0a0" strokeWidth="1.500" /></Draw>
      <div className="flex-1" />
      <svg width="50" height="38" viewBox="0 0 50 38" className="mr-[9px] shrink-0 overflow-visible" fill="none">
        <path d="M11 2.500c7-2 12-1 11 2s-6 3.500-9 4M15 8c4 0 5 1.500 3 4" stroke="#e0303a" strokeWidth="2.400" />
        <text transform="translate(0 27) scale(1.150 1)" fontSize="17" fontFamily="Liberation Sans" fontStyle="italic" fill="#4c3090">D</text>
        <text transform="translate(14 27) scale(1.150 1)" fontSize="20" fontFamily="Liberation Sans" fontStyle="italic" fill="#f2a010">S</text>
        <text x="8" y="38" fontSize="12" fontFamily="Liberation Sans" fontStyle="italic" fontWeight="700" textLength="41" lengthAdjust="spacingAndGlyphs" fill="#4c3090">CATIA</text>
      </svg>
    </div>
  );
}

function StatusBar() {
  return (
    <div className="flex h-[30px] shrink-0 bg-[#cfcfe6] text-[14.2px] leading-[29px] text-[#26262e]">
      <div>Select an object or a command</div>
      <div className="flex-1" />
      <div className="mt-[3px] h-[25px] w-[375px] border-b-2 border-l border-[#9d9dad] bg-white" />
      <div className="mt-[1px] h-[28px] w-[41px] border-2 border-t-white border-r-[#8d8d9d] border-b-[#8d8d9d] border-l-white"><Draw w={37} h={24}><path d="M12 6h8v7h-8zM10 19h19V4M23 14h3" stroke="#fff" strokeWidth="2" transform="translate(1 1)" /><path d="M12 6h8v7h-8zM10 19h19V4M23 14h3" stroke="#9c9ca6" strokeWidth="1.800" /></Draw></div>
      <div className="mt-[1px] ml-[1px] h-[28px] w-[42px] border-2 border-t-white border-r-[#8d8d9d] border-b-[#8d8d9d] border-l-white"><Draw w={37} h={24}><path d="M10 19h18V4" stroke="#fff" strokeWidth="2" transform="translate(1 1)" /><path d="M10 19h18V4" stroke="#9c9ca6" strokeWidth="2" /><circle cx="18" cy="11" r="7" fill="#e4e4f0" stroke="#9c9ca6" strokeWidth="1.500" /><path d="M18 6v2M16 10h2v5M15 15h6" stroke="#9c9ca6" strokeWidth="2" /></Draw></div>
    </div>
  );
}

/* ---------- Windows taskbar ---------- */

function Taskbar() {
  return (
    <div className="flex h-[59px] shrink-0 border-t border-[#4a4c5c] bg-[linear-gradient(90deg,#1c222c_0px,#1c222d_320px,#152448_380px,#12235a_520px,#121e55_620px,#121f58_860px,#181d48_960px,#1b1f38_1090px,#12204e_1160px,#132046_1290px,#191f31_1370px,#1b212b_1500px,#1b202a_1915px)] text-white">
      <Draw w={60} h={58}>
        <defs><linearGradient id="cloud" x1="0" y1="0" x2="0" y2="1"><stop offset="0" stopColor="#8db9f0" /><stop offset="1" stopColor="#e4efff" /></linearGradient></defs>
        <path d="M34 14c-1 9-6 13-13 12 2 8 14 10 20 4z" fill="#f59b23" />
        <path d="M27 42c-8 0-8-9-1-10 1-10 15-11 18-2 8 0 9 12 0 12z" fill="url(#cloud)" />
        <circle cx="44.500" cy="16.500" r="10" fill="#ff99a4" />
        <text x="44.500" y="22" fontSize="14.500" textAnchor="middle" fontFamily="Open Sans" fill="#2a1014">6</text>
      </Draw>
      <div className="w-[466px] pt-[8px] text-[14.6px] leading-[20px]"><div className="tracking-[-0.3px]">28°C</div><div className="text-[#d8d9dc]">Mostly cloudy</div></div>
      <Draw w={46} h={58}>
        <defs><linearGradient id="win" x1="0" y1="0" x2="1" y2="1"><stop offset="0" stopColor="#7fe0fb" /><stop offset="1" stopColor="#0f95ee" /></linearGradient></defs>
        <path d="M0 15h14v14H0zM15.500 15h14v14h-14zM0 30.500h14v14H0zM15.500 30.500h14v14h-14z" fill="url(#win)" />
      </Draw>
      <div className="mt-[9px] flex h-[40px] w-[275px] shrink-0 items-center rounded-full border border-[#434b78] bg-[#303a68] pl-[13px] text-[16px] text-[#d5d8e6]">
        <svg width="20" height="20" viewBox="0 0 20 20" fill="none" stroke="#e8eaf4" strokeWidth="1.800"><circle cx="8.500" cy="8" r="6.800" /><path d="M13.500 13l5 5.500" strokeLinecap="round" /></svg>
        <div className="ml-[12px]">Search</div>
        <div className="flex-1" />
        <svg width="60" height="32" viewBox="0 0 60 32" className="mr-[7px]">
          <defs><linearGradient id="ray" x1="0" y1="0" x2="0" y2="1"><stop offset="0" stopColor="#4f97a8" /><stop offset="1" stopColor="#e2eef2" /></linearGradient></defs>
          <path d="M8 2c3 5 6 7 13 8 7-2 13-1 18 3 5-2 8-1 10 2-1 6-6 10-15 11l-7 1c-3 3-8 2-9-2C12 21 7 14 8 2z" fill="url(#ray)" />
          <path d="M36 11C45 9 49 5 55 1" stroke="#9ab0b8" strokeWidth="1.300" fill="none" /><path d="M9 5c1 5 4 9 9 11M38 25c6-2 9-6 11-10" stroke="#dff4f8" fill="none" />
          <circle cx="15" cy="21" r="1.500" fill="#13305a" /><circle cx="23" cy="24" r="1.500" fill="#13305a" />
          <g fill="#8fd4ee"><circle cx="4" cy="20" r="2.500" /><circle cx="1.500" cy="14" r="1.500" /><circle cx="57" cy="14" r="2.500" /><circle cx="52" cy="19" r="1.500" /></g>
        </svg>
      </div>
      <Draw w={56} h={58} className="ml-[15px]"><rect x="7" y="14" width="23" height="21" rx="1.500" fill="#f0f0f0" /><rect x="0" y="22" width="22" height="21" rx="1.500" fill="#6c6c6e" opacity=".94" /><path d="M7 22h15v13H7z" fill="#a8a8aa" /></Draw>
      <Draw w={54} h={58}>
        <defs>
          <linearGradient id="cpa" x1="0" y1="0" x2="0" y2="1"><stop offset="0" stopColor="#1aa0f0" /><stop offset=".5" stopColor="#54b878" /><stop offset="1" stopColor="#f5c420" /></linearGradient>
          <linearGradient id="cpb" x1="0" y1="0" x2="0" y2="1"><stop offset="0" stopColor="#a850f0" /><stop offset=".6" stopColor="#f0588c" /><stop offset="1" stopColor="#ff9a54" /></linearGradient>
        </defs>
        <path d="M8 15h9c4 0 3 6 6 6l-7 2-5 13H3c-3 0-3-4-2-8l3-9c1-3 2-4 4-4z" fill="url(#cpa)" /><path d="M20 40h-8c-4 0-3-4-5-6l6-1 4-12h7c4 0 4 4 3 8l-3 8c-1 2-2 3-4 3z" fill="url(#cpb)" /><path d="M8 15h9c4 0 3 6 6 6h-6z" fill="#1769e0" /><path d="M13 33l4-11h-3l-4 11z" fill="#121f50" />
      </Draw>
      <Draw w={55} h={58}><path d="M0 17c0-2 1-3 3-3h7l3 4h15c1 0 2 1 2 2v8H0z" fill="#e0a010" /><rect x="0" y="18" width="30" height="23" rx="2" fill="#ffcf48" /><path d="M5 41v-4c0-1 1-2 2-2h16c1 0 2 1 2 2v4z" fill="#1878d0" /><path d="M10 38h10" stroke="#0c4c94" /></Draw>
      <Draw w={55} h={58}>
        <defs><linearGradient id="edg" x1="0" y1="0" x2="1" y2="0"><stop offset="0" stopColor="#1f9ae0" /><stop offset="1" stopColor="#66dc58" /></linearGradient></defs>
        <circle cx="15" cy="29" r="15" fill="#1474d4" /><path d="M0 28C1 8 29 8 30 27c0 8-10 9-11 5 2-4-1-9-7-8C6 23 1 24 0 28z" fill="url(#edg)" /><path d="M12 24c-5 6-2 18 12 17 2-1 4-3 5-6-7 3-15 1-15-5 0-3 1-4 3-5-1-1-3-2-5-1z" fill="#0b4596" />
      </Draw>
      <Draw w={55} h={58}><path d="M8 19v-3c0-1 1-2 2-2h9c1 0 2 1 2 2v3" stroke="#20b4ee" strokeWidth="2" /><path d="M0 18h29v21c0 3-1 4-4 4H4c-3 0-4-1-4-4z" fill="#f4f4f4" /><path d="M9 25h5v5H9z" fill="#f04e24" /><path d="M15.500 25h5v5h-5z" fill="#7cba08" /><path d="M9 31.500h5v5H9z" fill="#08a0ee" /><path d="M15.500 31.500h5v5h-5z" fill="#fcb808" /></Draw>
      <Draw w={55} h={58}><path d="M4 22l13-9 13 9v16c0 2-1 4-4 4H9c-3 0-5-2-5-4z" fill="#1490df" /><path d="M4 23l13-10 10 6L10 31z" fill="#0c60b8" /><path d="M30 23v15c0 2-1 4-4 4H8z" fill="#40d0fa" /><rect x="0" y="19" width="15" height="16" rx="2" fill="#0a64c4" /><circle cx="7.500" cy="27" r="4" stroke="#fff" strokeWidth="2.300" /></Draw>
      <Draw w={56} h={58}><path d="M2 43l2-8C-3 23 6 14 15 14c19 0 19 28 0 28-3 0-5-1-7-2z" stroke="#28d060" strokeWidth="2.800" /><path d="M9 21c-4 5 5 16 12 15 3-1 3-4 1-5l-3-1-2 2c-3-1-4-3-5-5l1-2-1-4z" fill="#28d060" /><circle cx="26" cy="18" r="10" fill="#48b4f4" /><text x="26" y="23" fontSize="14.500" textAnchor="middle" fontFamily="Open Sans" fill="#0a1a28">3</text></Draw>
      <Draw w={54} h={58}><path d="M14 14c4 3 9 4 14 4v10H14z" fill="#1a9aec" /><path d="M14 14C10 17 5 18 0 18v10h14z" fill="#44bdf8" /><path d="M0 28c0 7 6 12 14 15V28z" fill="#1580dc" /><path d="M28 28c0 7-6 12-14 15V28z" fill="#0b5cb4" /></Draw>
      <Draw w={45} h={58}><rect x="0" y="18" width="30" height="22" rx="1.500" fill="#3c3c40" /><path d="M0 20c0-1 1-2 2-2h9v4H0z" fill="#d0d0d0" /><path d="M11 18h9v4h-9z" fill="#a0a0a0" /><path d="M20 18h8c1 0 2 1 2 2v2H20z" fill="#707074" /><path d="M4 26l6 5-6 5" stroke="#d8d8d8" strokeWidth="3" /><path d="M13 35.500h10" stroke="#fff" strokeWidth="2.600" /><rect x="11" y="49" width="8" height="4" rx="2" fill="#9a9ca6" /></Draw>
      <div className="mt-[4px] flex h-[50px] w-[50px] flex-col items-center rounded-[5px] border border-[#353947] bg-[#272c3b] pt-[11px]">
        <Galaxy className="h-[28px] w-[30px] border-2 border-white" />
        <div className="mt-[5px] h-[4px] w-[20px] rounded-full bg-[#4cc2ff]" />
      </div>
      <div className="flex-1" />
      <Draw w={36} h={58}><path d="M1 31l6-6 6 6" stroke="#fff" strokeWidth="1.900" /></Draw>
      <Draw w={40} h={58}><path d="M5 35c-7 0-6-8 0-8 1-6 9-6 11 0 6 0 6 8 0 8z" fill="#7c8086" /><path d="M2 22l17 15" stroke="#1b202a" strokeWidth="3" /><path d="M3 22l17 15" stroke="#e6e6e6" strokeWidth="1.300" /></Draw>
      <Draw w={30} h={58}><g stroke="#fff" strokeWidth="1.500"><circle cx="10" cy="28" r="9.500" /><ellipse cx="10" cy="28" rx="4.200" ry="9.500" /><path d="M1 24.500h18M1 31h10" /></g><circle cx="15.500" cy="33" r="6.500" fill="#1b202a" /><circle cx="15.500" cy="33" r="4.800" stroke="#fff" strokeWidth="1.500" /><path d="M12 36.500l7-7" stroke="#fff" strokeWidth="1.500" /></Draw>
      <Draw w={30} h={58}><path d="M1 26h3l4-4v14l-4-4H1z" stroke="#fff" strokeWidth="1.400" strokeLinejoin="round" /><path d="M11 26c1.500 2 1.500 4 0 6M13.500 24c3 3 3 7 0 10" stroke="#fff" strokeWidth="1.400" /><path d="M16.500 22c4 4 4 10 0 14" stroke="#666b75" strokeWidth="1.300" /></Draw>
      <Draw w={22} h={58}><rect x="1.500" y="23" width="16" height="11.500" rx="2.500" stroke="#fff" strokeWidth="1.500" /><rect x="4" y="25.500" width="11" height="6.500" rx="1" fill="#fff" /><path d="M19 26.500v4.500" stroke="#fff" strokeWidth="2" /><path d="M5 18L0 25h3l-1 5 6-7H5z" fill="#fff" stroke="#1b202a" strokeWidth=".8" /></Draw>
      <div className="mr-[23px] w-[97px] pt-[8px] text-right text-[14.8px] leading-[20px]"><div className="tracking-[-0.2px]">19:12</div><div>17-09-2025</div></div>
    </div>
  );
}

export default function App() {
  return (
    <div className={`flex h-[1079px] w-[1915px] flex-col overflow-hidden bg-[#f0f0f0] ${UI}`}>
      <TitleBar />
      <MenuBar />
      <TopToolbar />
      <div className="flex h-[840px] shrink-0 bg-[#f0f0f0]">
        <Tree />
        <DrawingWindow />
        <RightToolbar />
      </div>
      <BottomToolbar />
      <StatusBar />
      <Taskbar />
    </div>
  );
}
